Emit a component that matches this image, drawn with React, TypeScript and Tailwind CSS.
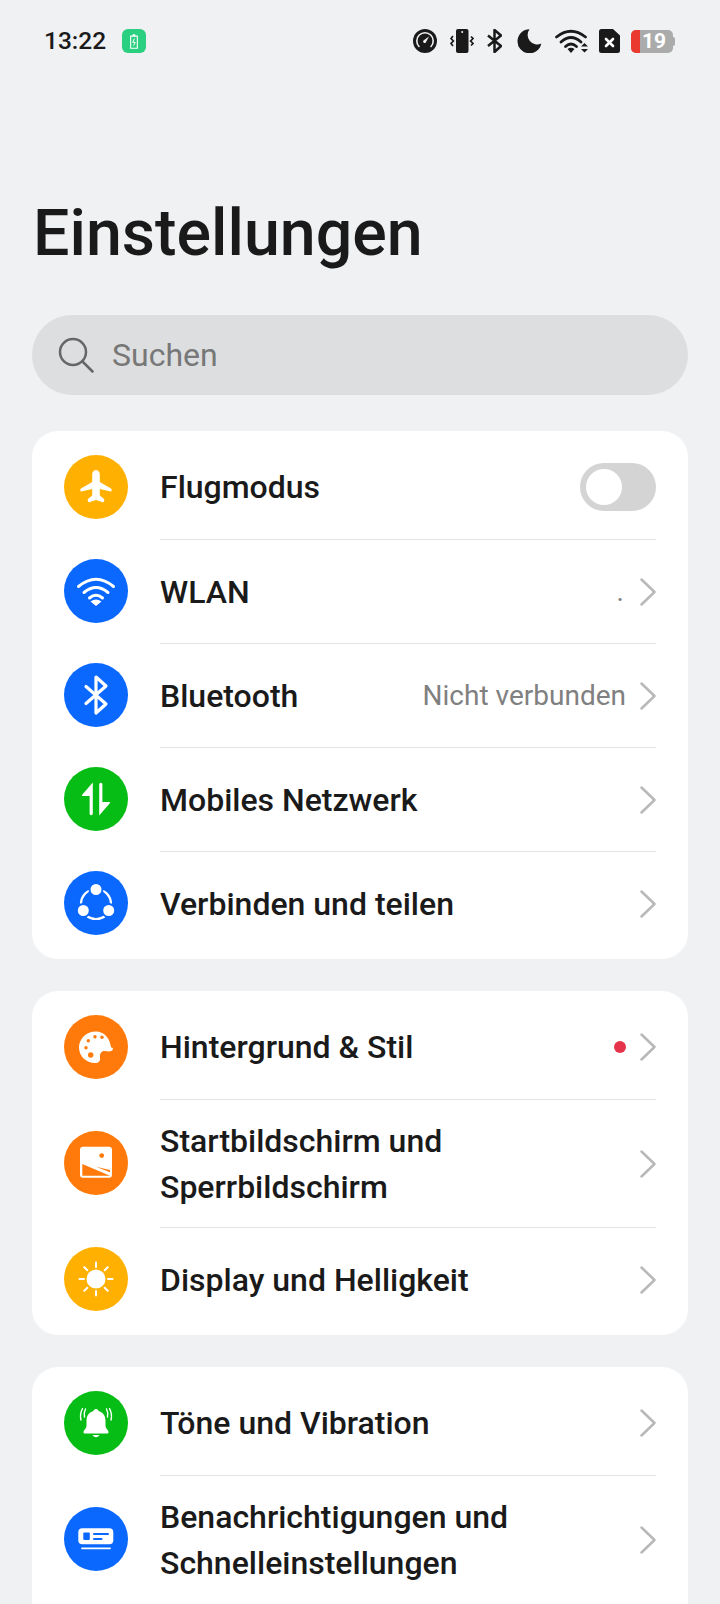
import type { ReactNode } from 'react';

function CircleIcon({ bg, children }: { bg: string; children: ReactNode }) {
  return (
    <div className={`h-16 w-16 shrink-0 rounded-full ${bg}`}>
      <svg viewBox="0 0 64 64" className="h-16 w-16">{children}</svg>
    </div>
  );
}

const PlaneIcon = () => (
  <path fill="#fff" d="M32 15c-2.400 0-3.800 2.200-3.800 4.600V27L17 33.600c-1 .6-1.200 2.800.3 2.800L28.200 34v6.500l-4 3.300c-1 1-.5 3.800 1 3.400L32 45l6.800 2.200c1.500.4 2-2.400 1-3.400l-4-3.300V34l10.900 2.400c1.500 0 1.300-2.200.3-2.800L35.800 27v-7.400C35.800 17.200 34.400 15 32 15z" />
);

const WifiIcon = () => (
  <g fill="none" stroke="#fff" strokeWidth="3" strokeLinecap="round">
    <path d="M14.500 27.500Q32 13 49.500 27.500" />
    <path d="M20 33.500Q32 23.500 44 33.500" />
    <path d="M25.500 39Q32 33.500 38.500 39" />
    <path fill="#fff" stroke="none" d="M26.500 42.500Q32 38.500 37.500 42.500L32 47z" />
  </g>
);

const BluetoothIcon = () => (
  <path fill="none" stroke="#fff" strokeWidth="3.200" strokeLinecap="round" strokeLinejoin="round" d="M22 23.500L42 41L32 50V14L42 23L22 40.500" />
);

const DataIcon = () => (
  <g fill="#fff">
    <path d="M28.800 15.500V46.600a1.600 1.600 0 0 1-3.200 0V29h-7c-.6 0-.8-.8-.4-1.200z" />
    <path d="M35.200 48.500V17.400a1.600 1.600 0 0 1 3.200 0V35h7c.6 0 .8.8.4 1.200z" />
  </g>
);

const ShareIcon = () => (
  <g>
    <circle cx="32" cy="33" r="15" fill="none" stroke="#fff" strokeWidth="2.200" />
    <g fill="#fff" stroke="#0a68ff" strokeWidth="2">
      <circle cx="32" cy="18.500" r="6.500" />
      <circle cx="19.300" cy="39.500" r="6.500" />
      <circle cx="44.700" cy="39.500" r="6.500" />
    </g>
  </g>
);

const PaletteIcon = () => (
  <g>
    <path fill="#fff" d="M32 16.500C22 16.500 15 24 15 32.500C15 41 22 48 31 48C35 48 36.500 46 36 42.500C35.500 38 38 35.500 41 36C44 36.500 46 37 48 35.500C49.500 34.500 49.500 32.500 47 32.500C46 23 40 16.500 32 16.500z" />
    <g fill="#ff7a0a">
      <circle cx="24.300" cy="25.700" r="1.700" />
      <circle cx="31" cy="21.700" r="1.700" />
      <circle cx="38" cy="22.300" r="1.700" />
      <circle cx="22" cy="32.700" r="1.700" />
      <circle cx="26.700" cy="40" r="2.700" />
    </g>
  </g>
);

const WallpaperIcon = () => (
  <g>
    <rect x="16" y="15.700" width="32" height="31" rx="3" fill="#fff" />
    <circle cx="37.700" cy="24.600" r="2.400" fill="#ff7a0a" />
    <path fill="#ff7a0a" d="M18.300 33L46 44.700H18.300z" />
    <path fill="#ff7a0a" d="M32 35.700L46 39V41.300z" />
  </g>
);

const SunIcon = () => (
  <g>
    <circle cx="32" cy="32" r="9.500" fill="#fff" />
    <g stroke="#fff" strokeWidth="2" strokeLinecap="round">
      <path d="M32 15.500v4.500M32 44v4.500M15.500 32h4.500M44 32h4.500" />
      <path d="M20.300 20.300l3 3M40.700 40.700l3 3M20.300 43.700l3-3M40.700 23.300l3-3" />
    </g>
  </g>
);

const BellIcon = () => (
  <g>
    <path fill="#fff" d="M32 18c-1.500 0-2.500 1-2.500 2C24.500 21.500 22.500 25 22.500 30v5c0 2.500-3 4-3 6c0 1 .5 1.500 1.500 1.500h22c1 0 1.500-.5 1.500-1.500c0-2-3-3.500-3-6v-5C41.500 25 39.500 21.500 34.500 20c0-1-1-2-2.500-2z" />
    <path fill="#fff" d="M28.500 44h7c-1 1.600-2.200 2.200-3.500 2.200s-2.500-.6-3.500-2.200z" />
    <g fill="none" stroke="#fff" strokeWidth="1.400" strokeLinecap="round">
      <path d="M18.500 17.500Q15.500 23 17 29" />
      <path d="M21.500 18Q19.500 22 20.500 26" />
      <path d="M45.500 17.500Q48.500 23 47 29" />
      <path d="M42.500 18Q44.500 22 43.500 26" />
    </g>
  </g>
);

const NoticeIcon = () => (
  <g>
    <rect x="14.300" y="21.300" width="35" height="16" rx="4" fill="#fff" />
    <rect x="19.300" y="25.500" width="6.500" height="7.500" rx="1" fill="#0a68ff" />
    <path stroke="#0a68ff" strokeWidth="2" strokeLinecap="round" d="M30 27h14M30 32h7.500" />
    <path stroke="#fff" strokeWidth="1.800" strokeLinecap="round" d="M18 41.300h28" />
  </g>
);

function Chevron() {
  return (
    <svg viewBox="0 0 16 28" className="h-7 w-4 shrink-0">
      <path d="M1.500 1.500L14.500 14L1.500 26.500" fill="none" stroke="#b8b8b8" strokeWidth="2.500" strokeLinecap="round" strokeLinejoin="round" />
    </svg>
  );
}

function Row({ icon, first, tall, right, children }: { icon: ReactNode; first?: boolean; tall?: boolean; right?: ReactNode; children: ReactNode }) {
  return (
    <div className="flex items-center gap-8">
      {icon}
      <div className={`flex min-w-0 flex-1 items-center justify-between border-[#e2e2e2] ${first ? '' : 'border-t'} ${tall ? 'h-[128px]' : 'h-[104px]'}`}>
        <div className="text-[32px] font-medium leading-[46px] text-[#1a1a1a]">{children}</div>
        {right ?? <Chevron />}
      </div>
    </div>
  );
}

function StatusIcons() {
  return (
    <div className="flex items-center">
      <svg viewBox="0 0 24 24" className="h-6 w-6">
        <circle cx="12" cy="12" r="12" fill="#1a1a1a" />
        <path d="M6 17.500A8.200 8.200 0 1 1 18 17.500" fill="none" stroke="#eff1f3" strokeWidth="1.600" strokeLinecap="round" />
        <path d="M10.500 11.500L16 7.500L12.800 13.500a1.500 1.500 0 0 1-2.300-2z" fill="#eff1f3" />
      </svg>
      <svg viewBox="0 0 24 24" className="ml-[13px] h-6 w-6">
        <rect x="6" y="0" width="12.500" height="24" rx="2" fill="#1a1a1a" />
        <circle cx="12.200" cy="3" r="1" fill="#eff1f3" />
        <path d="M3 7l-2 2.500L3.400 12L1 14.500L3 17" fill="none" stroke="#1a1a1a" strokeWidth="1.700" />
        <path d="M21 7.500l2 2L20.600 12l2.400 2.500L21 16.500" fill="none" stroke="#1a1a1a" strokeWidth="1.700" />
      </svg>
      <svg viewBox="0 0 15 24" className="ml-[13px] h-6 w-[15px]">
        <path d="M1 6.500L14 17L7.500 23V1L14 6.500L1 17" fill="none" stroke="#1a1a1a" strokeWidth="2.500" strokeLinejoin="round" />
      </svg>
      <svg viewBox="0 0 25 24" className="ml-[15px] h-6 w-[25px]">
        <path d="M13 0.300A12 12 0 1 0 24.800 14.500A9.500 9.500 0 0 1 13 0.300z" fill="#1a1a1a" transform="translate(-0.500 0)" />
      </svg>
      <svg viewBox="0 0 35 24" className="ml-[13px] h-6 w-[35px]">
        <g fill="none" stroke="#1a1a1a" strokeWidth="2.800" strokeLinecap="round">
          <path d="M1.500 8Q16 -3.500 30.500 8" />
          <path d="M6 13Q16 4 26 13" />
          <path d="M10.500 17.500Q16 12.500 21.500 17.500" />
        </g>
        <path d="M12.500 20Q16 17.500 19.500 20L16 24z" fill="#1a1a1a" />
        <path d="M26 17.500h7l-3.500-3.500zM26 20h7l-3.500 3.500z" fill="#1a1a1a" />
      </svg>
      <svg viewBox="0 0 21 24" className="ml-[9px] h-6 w-[21px]">
        <path d="M2.500 0H14L21 6.500V21.500A2.500 2.500 0 0 1 18.500 24H2.500A2.500 2.500 0 0 1 0 21.500V2.500A2.500 2.500 0 0 1 2.500 0z" fill="#1a1a1a" />
        <path d="M7 10l7 7M14 10l-7 7" stroke="#fff" strokeWidth="2.600" strokeLinecap="round" />
      </svg>
      <div className="ml-[11px] flex items-center">
        <div className="relative flex h-[23px] w-[42px] items-center overflow-hidden rounded-[5px] bg-[#ababab]">
          <div className="h-full w-[9px] bg-[#ea3a30]" />
          <span className="ml-[2px] text-[21px] font-bold leading-none text-white">19</span>
        </div>
        <div className="h-[9px] w-[2px] rounded-r-sm bg-[#ababab]" />
      </div>
    </div>
  );
}

export default function App() {
  return (
    <div className="h-[1604px] overflow-hidden bg-[#eff1f3] font-['Roboto',sans-serif]">
      <div className="flex h-[82px] items-center justify-between pl-[44px] pr-[45px]">
        <div className="flex items-center gap-4">
          <span className="pt-px text-[24.500px] font-medium text-[#1a1a1a]">13:22</span>
          <div className="flex h-6 w-6 items-center justify-center rounded-md bg-[#2bcf80]">
            <svg viewBox="0 0 12 18" className="h-[15px] w-[10px]">
              <path d="M4.500 1h3M2 2.500h8v14.500h-8z" fill="none" stroke="#fff" strokeWidth="1.300" />
              <path d="M6.500 5.500L4.500 10h3L5.500 14" fill="none" stroke="#fff" strokeWidth="1.200" />
            </svg>
          </div>
        </div>
        <StatusIcons />
      </div>

      <h1 className="mt-[110px] px-[33px] text-[64.500px] font-medium leading-[82px] text-[#1a1a1a]">Einstellungen</h1>

      <div className="mx-8 mt-[41px] flex h-20 items-center rounded-full bg-[#dddee0] pl-[26px]">
        <svg viewBox="0 0 36 36" className="h-9 w-9">
          <circle cx="15" cy="15" r="13" fill="none" stroke="#666" strokeWidth="2.500" />
          <path d="M24.500 24.500L34.500 34.500" stroke="#666" strokeWidth="2.500" strokeLinecap="round" />
        </svg>
        <span className="ml-[18px] text-[32px] text-[#777]">Suchen</span>
      </div>

      <div className="mx-8 mt-9 rounded-[26px] bg-white px-8 py-1">
        <Row
          first
          icon={<CircleIcon bg="bg-[#ffb000]"><PlaneIcon /></CircleIcon>}
          right={
            <div className="flex h-12 w-[76px] items-center rounded-full bg-[#d4d4d4] pl-[6px]">
              <div className="h-9 w-9 rounded-full bg-white" />
            </div>
          }
        >
          Flugmodus
        </Row>
        <Row
          icon={<CircleIcon bg="bg-[#0a68ff]"><WifiIcon /></CircleIcon>}
          right={
            <div className="flex items-center gap-4 text-[28px] text-[#808080]">
              <span>.</span>
              <Chevron />
            </div>
          }
        >
          WLAN
        </Row>
        <Row
          icon={<CircleIcon bg="bg-[#0a68ff]"><BluetoothIcon /></CircleIcon>}
          right={
            <div className="flex items-center gap-[14px] text-[28px] text-[#808080]">
              <span>Nicht verbunden</span>
              <Chevron />
            </div>
          }
        >
          Bluetooth
        </Row>
        <Row icon={<CircleIcon bg="bg-[#06bd15]"><DataIcon /></CircleIcon>}>Mobiles Netzwerk</Row>
        <Row icon={<CircleIcon bg="bg-[#0a68ff]"><ShareIcon /></CircleIcon>}>Verbinden und teilen</Row>
      </div>

      <div className="mx-8 mt-8 rounded-[26px] bg-white px-8 py-1">
        <Row
          first
          icon={<CircleIcon bg="bg-[#ff7a0a]"><PaletteIcon /></CircleIcon>}
          right={
            <div className="flex items-center gap-[14px]">
              <div className="h-3 w-3 rounded-full bg-[#e5334b]" />
              <Chevron />
            </div>
          }
        >
          Hintergrund &amp; Stil
        </Row>
        <Row tall icon={<CircleIcon bg="bg-[#ff7a0a]"><WallpaperIcon /></CircleIcon>}>
          Startbildschirm und<br />Sperrbildschirm
        </Row>
        <Row icon={<CircleIcon bg="bg-[#ffb000]"><SunIcon /></CircleIcon>}>Display und Helligkeit</Row>
      </div>

      <div className="mx-8 mt-8 rounded-[26px] bg-white px-8 pb-10 pt-1">
        <Row first icon={<CircleIcon bg="bg-[#06bd15]"><BellIcon /></CircleIcon>}>Töne und Vibration</Row>
        <Row tall icon={<CircleIcon bg="bg-[#0a68ff]"><NoticeIcon /></CircleIcon>}>
          Benachrichtigungen und<br />Schnelleinstellungen
        </Row>
      </div>
    </div>
  );
}
